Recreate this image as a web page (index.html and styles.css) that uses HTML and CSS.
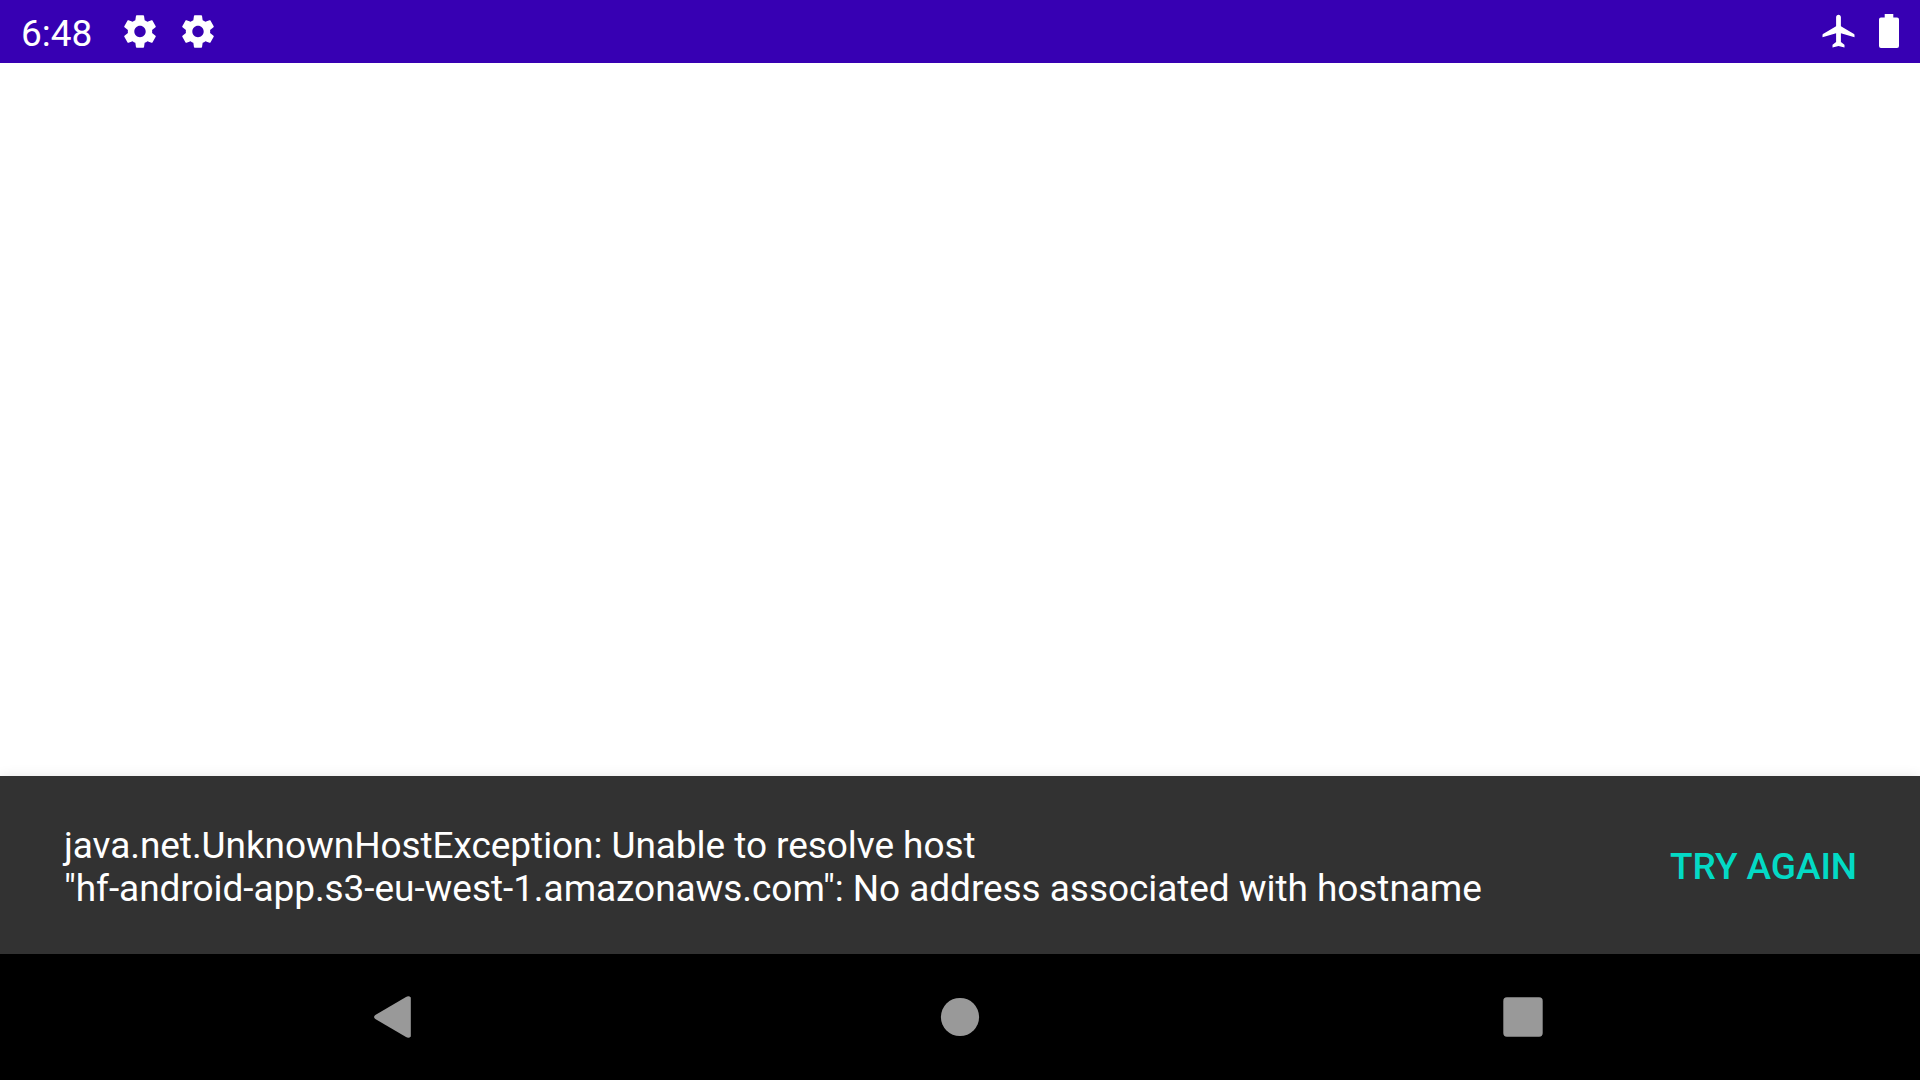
FILE: index.html
```html
<!DOCTYPE html>
<html lang="en">
<head>
<meta charset="utf-8">
<title>Connection error</title>
<link rel="stylesheet" href="styles.css">
</head>
<body>
<div class="screen">
  <header class="status-bar">
    <div class="status-left">
      <span class="clock">6:48</span>
      <svg class="gear" viewBox="0 0 24 24"><path id="gear" d="M19.43 12.98c.04-.32.07-.64.07-.98s-.03-.66-.07-.98l2.11-1.65c.19-.15.24-.42.12-.64l-2-3.46c-.12-.22-.39-.3-.61-.22l-2.49 1c-.52-.4-1.08-.73-1.69-.98l-.38-2.65C14.46 2.18 14.25 2 14 2h-4c-.25 0-.46.18-.49.42l-.38 2.65c-.61.25-1.17.59-1.69.98l-2.49-1c-.23-.09-.49 0-.61.22l-2 3.46c-.13.22-.07.49.12.64l2.11 1.65c-.04.32-.07.65-.07.98s.03.66.07.98l-2.11 1.65c-.19.15-.24.42-.12.64l2 3.46c.12.22.39.3.61.22l2.49-1c.52.4 1.08.73 1.69.98l.38 2.65c.03.24.24.42.49.42h4c.25 0 .46-.18.49-.42l.38-2.65c.61-.25 1.17-.59 1.69-.98l2.49 1c.23.09.49 0 .61-.22l2-3.46c.12-.22.07-.49-.12-.64l-2.11-1.65zM12 15.5c-1.93 0-3.5-1.57-3.5-3.5s1.57-3.5 3.5-3.5 3.5 1.57 3.5 3.5-1.57 3.5-3.5 3.5z"/></svg>
      <svg class="gear" viewBox="0 0 24 24"><use href="#gear"/></svg>
    </div>
    <div class="status-right">
      <svg class="airplane" viewBox="0 0 33 34"><path d="M16.5 .8c1.4 0 2.4 1.1 2.4 2.5v9L32 20.1q.5.4.5 1v2.2L18.9 19.3v8.7l3.2 2.4q.4.3.4.8V33.5l-6-1.6-6 1.6V31.2q0-.5.4-.8l3.2-2.4V19.3L.5 23.3v-2.2q0-.6.5-1L14.1 12.3V3.3c0-1.4 1-2.5 2.4-2.5z"/></svg>
      <svg class="battery" viewBox="0 0 20 34"><path d="M5.7 0h8.6v3.4h3.7q2 0 2 2V32q0 2-2 2H2q-2 0-2-2V5.4q0-2 2-2h3.7z"/></svg>
    </div>
  </header>
  <main class="content"></main>
  <section class="snackbar">
    <p class="message">java.net.UnknownHostException: Unable to resolve host<br>"hf-android-app.s3-eu-west-1.amazonaws.com": No address associated with hostname</p>
    <button class="action" type="button">TRY AGAIN</button>
  </section>
  <nav class="nav-bar">
    <svg class="nav-back" viewBox="0 0 37 42"><path d="M1.3 18.9 32 .9Q35-.6 36.8 1.6V40.4Q35 42.6 32 41.1L1.3 23.1Q-1.2 21 1.3 18.9z"/></svg>
    <svg class="nav-home" viewBox="0 0 40 40"><circle cx="20" cy="20" r="19.1"/></svg>
    <svg class="nav-recent" viewBox="0 0 40 40"><rect x=".3" y=".3" width="39.4" height="39.4" rx="3.6"/></svg>
  </nav>
</div>
</body>
</html>
```

FILE: styles.css
```css
* {
  box-sizing: border-box;
}

body {
  margin: 0;
  font-family: Roboto, sans-serif;
  font-size: 37px;
  line-height: 43px;
  color: #fff;
}

svg {
  display: block;
  flex: none;
}

.screen {
  display: flex;
  flex-direction: column;
  width: 1920px;
  height: 1080px;
  overflow: hidden;
  background: #fff;
}

.status-bar {
  display: flex;
  justify-content: space-between;
  height: 63px;
  padding: 0 21px 1px;
  background: #3700b3;
  fill: #fff;
}

.status-left,
.status-right {
  display: flex;
  align-items: center;
}

.clock {
  width: 99px;
  padding-top: 4px;
}

.gear {
  width: 40px;
  height: 39px;
  margin: 1px 18px 0 0;
}

.airplane {
  width: 33px;
  height: 34px;
  margin-right: 24px;
}

.battery {
  width: 20px;
  height: 34px;
}

.content {
  flex: 1;
}

.snackbar {
  display: flex;
  align-items: center;
  justify-content: space-between;
  height: 178px;
  padding: 0 63px 0 64px;
  background: #323232;
  box-shadow: 0 3px 14px rgba(0, 0, 0, 0.14);
}

.message {
  margin: 0;
  padding-top: 4px;
  letter-spacing: -0.06px;
  white-space: nowrap;
}

.action {
  padding: 2px 0 0;
  border: 0;
  background: none;
  font: inherit;
  font-weight: 500;
  letter-spacing: -0.06px;
  color: #03dac5;
}

.nav-bar {
  position: relative;
  display: grid;
  grid-template-columns: 1fr 40px 1fr;
  align-items: center;
  height: 126px;
  padding: 0 374px;
  background: #000;
  fill: #999;
}

.nav-back {
  width: 37px;
  height: 42px;
}

.nav-home,
.nav-recent {
  width: 40px;
  height: 40px;
}

.nav-recent {
  justify-self: end;
  margin-right: 3px;
}
```
